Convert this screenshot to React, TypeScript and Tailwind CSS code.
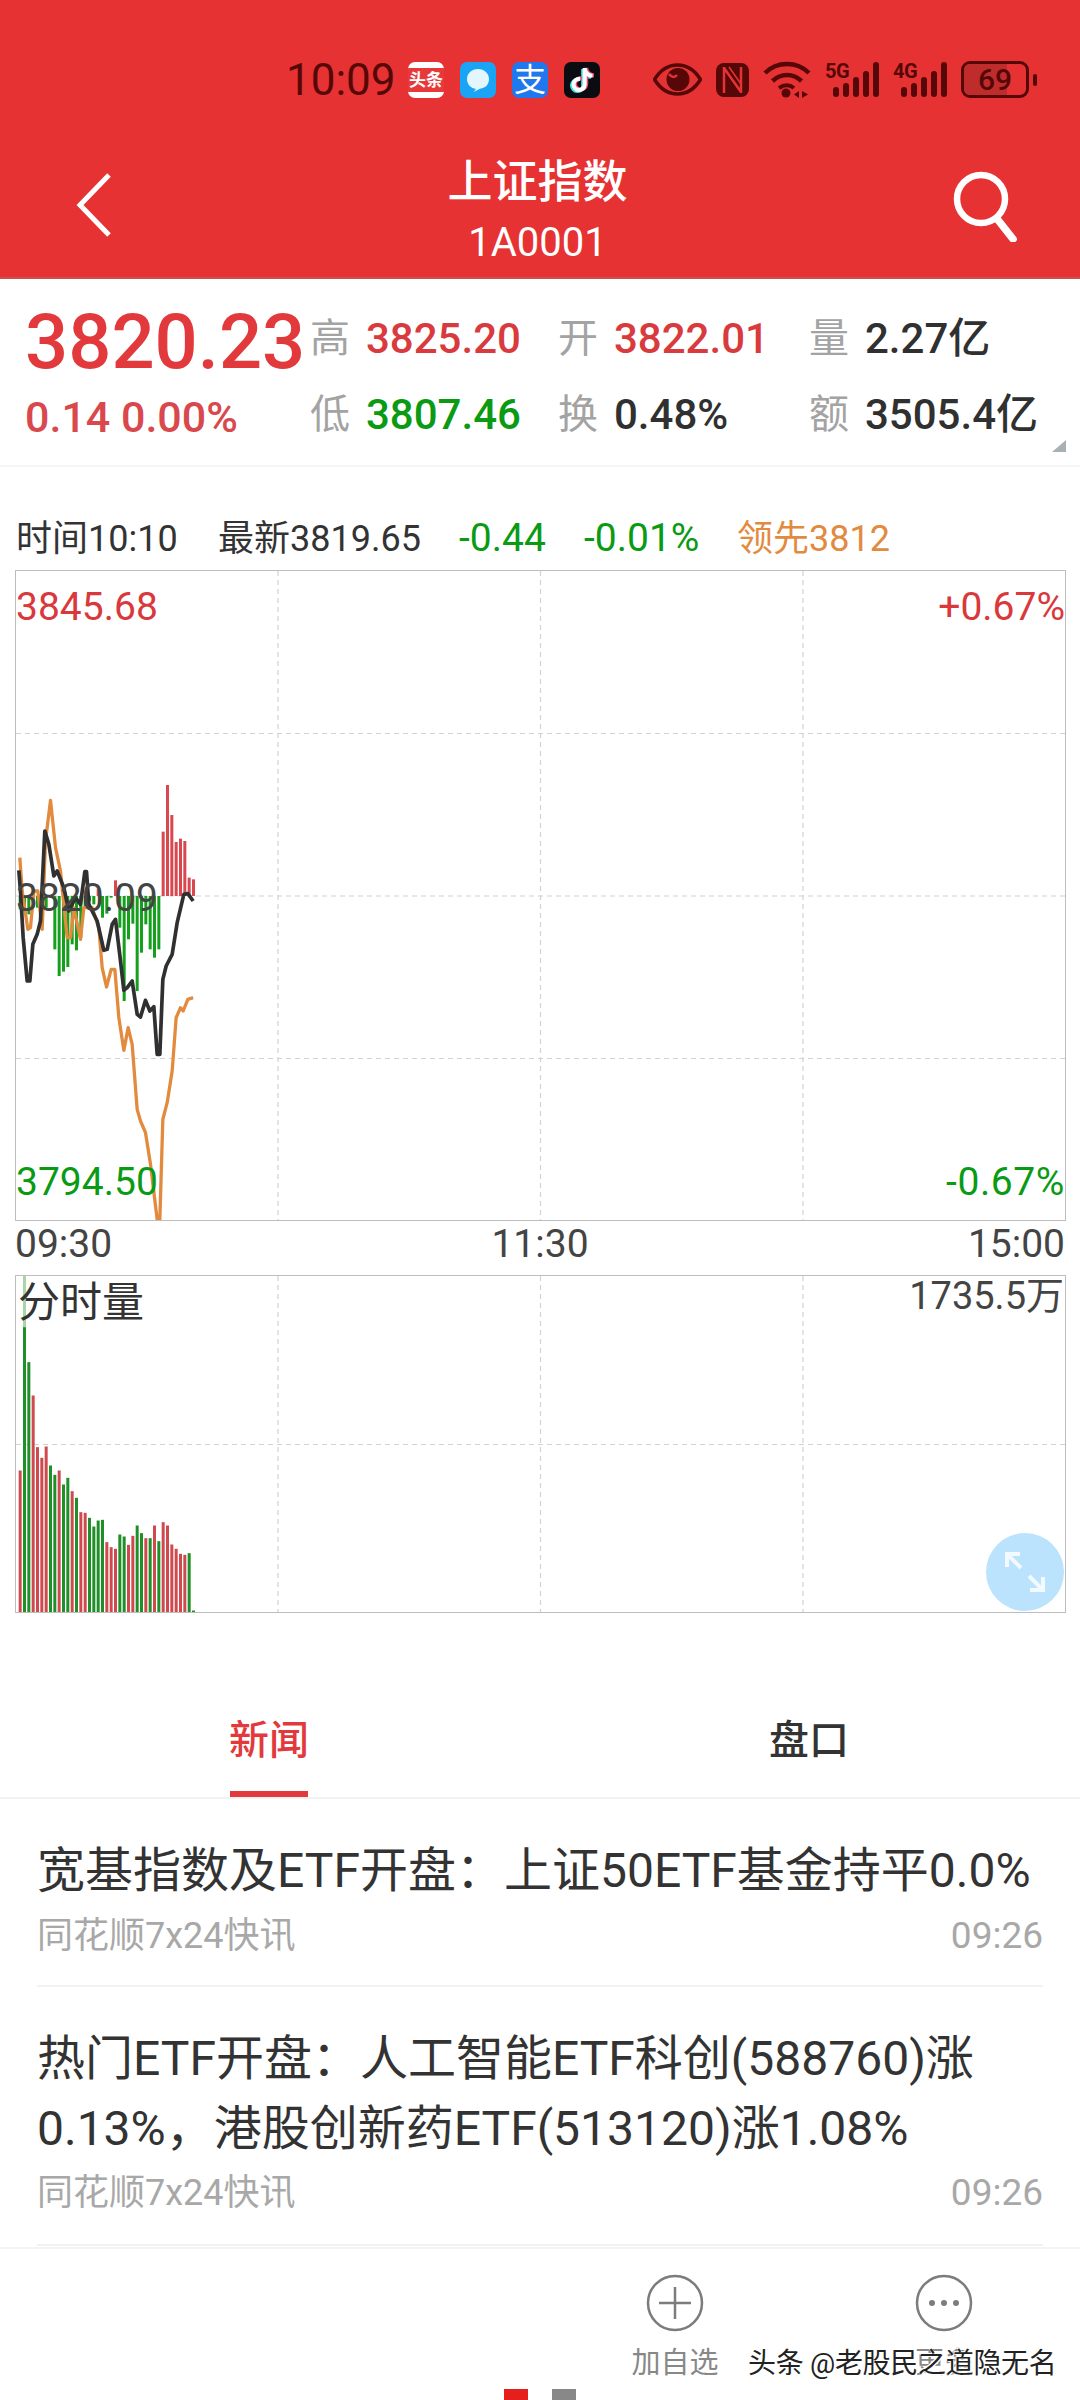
import React from "react";
import { FaTiktok } from "react-icons/fa6";

const RED = "#d93a3e";
const GREEN = "#0a9a14";
const ORANGE = "#e28a3e";
const ax = (u: number) => u / 3 - 15.5;

const priceLine: [number, number][] = [[55,388],[60,450],[68,590],[80,720],[88,720],[97,610],[110,580],[120,540],[133,270],[145,310],[160,405],[170,390],[190,440],[205,510],[225,470],[240,490],[253,392],[258,392],[265,490],[290,540],[310,628],[320,625],[335,550],[345,535],[360,660],[370,748],[380,740],[395,720],[410,820],[420,828],[435,778],[448,810],[460,797],[470,940],[478,940],[487,715],[497,675],[515,640],[530,545],[550,460],[562,458],[578,480]];
const leadLine: [number, number][] = [[58,350],[65,450],[82,565],[90,560],[100,450],[112,450],[125,565],[135,300],[150,178],[165,320],[180,390],[200,590],[210,590],[220,500],[240,595],[250,500],[275,500],[295,560],[305,680],[318,738],[332,685],[343,685],[355,830],[370,928],[383,860],[395,910],[410,1105],[420,1140],[435,1175],[450,1270],[470,1435],[478,1435],[487,1135],[500,1085],[515,990],[527,830],[540,800],[548,810],[562,775],[578,770]];
const priceBars: [number, number][] = [[59,505],[72,510],[85,520],[98,500],[111,500],[137,500],[150,470],[163,625],[176,705],[189,692],[202,678],[215,610],[228,628],[241,590],[254,500],[267,480],[280,490],[293,445],[306,530],[319,518],[332,470],[345,418],[358,560],[371,780],[384,595],[397,548],[410,750],[423,635],[436,550],[449,625],[462,650],[475,625],[488,272],[501,132],[514,222],[527,303],[540,293],[553,300],[566,410],[579,415]];
const volBars: [number, number, number][] = [[59,630,1],[72,200,0],[85,305,0],[98,405,1],[111,560,1],[124,592,1],[137,558,1],[150,615,0],[163,643,0],[176,630,1],[189,672,0],[202,652,0],[215,692,1],[228,712,0],[241,755,1],[254,757,1],[267,772,0],[280,798,0],[293,780,0],[306,778,0],[319,845,1],[332,860,1],[345,865,1],[358,822,0],[371,828,0],[384,853,1],[397,826,1],[410,795,0],[423,818,0],[436,833,1],[449,833,0],[462,795,1],[475,842,0],[488,785,1],[501,795,1],[514,852,1],[527,865,1],[540,880,1],[553,883,1],[566,878,0],[579,1050,0]];

const VLines = ({ h }: { h: number }) => (
  <>
    {[262, 524.5, 787].map((x) => (
      <line key={x} x1={x} x2={x} y1={0} y2={h} stroke="#d2d2d2" strokeWidth="1.2" strokeDasharray="5 4" />
    ))}
  </>
);

const PriceChart = () => {
  const py = (v: number) => 740 + v / 3 - 570;
  const pts = (a: [number, number][]) => a.map(([u, v]) => `${ax(u)},${py(v)}`).join(" ");
  return (
    <svg width="1049" height="649" viewBox="0 0 1049 649" className="block">
      <VLines h={649} />
      {[162.5, 325, 487.5].map((y) => (
        <line key={y} x1={0} x2={1049} y1={y} y2={y} stroke="#d2d2d2" strokeWidth="1.2" strokeDasharray="5 4" />
      ))}
      {priceBars.map(([u, v]) => {
        const base = py(465);
        const y = py(v);
        const up = y < base;
        return <rect key={u} x={ax(u) - 1.5} width="3" y={Math.min(y, base)} height={Math.abs(y - base)} fill={up ? "#d9474f" : "#14a01c"} />;
      })}
      <polyline points={pts(leadLine)} fill="none" stroke={ORANGE} strokeWidth="3.3" strokeLinejoin="round" />
      <polyline points={pts(priceLine)} fill="none" stroke="#303030" strokeWidth="3.7" strokeLinejoin="round" />
    </svg>
  );
};

const VolChart = () => {
  const vy = (v: number) => v / 3 - 15.5;
  return (
    <svg width="1049" height="336" viewBox="0 0 1049 336" className="block">
      <VLines h={336} />
      <line x1={0} x2={1049} y1={168.5} y2={168.5} stroke="#d2d2d2" strokeWidth="1.2" strokeDasharray="5 4" />
      <rect x={ax(72) - 1.5} width="3" y={0} height={vy(200)} fill="#a9d6a9" />
      {volBars.map(([u, v, r]) => (
        <rect key={u} x={ax(u) - 1.5} width="3" y={vy(v)} height={336 - vy(v)} fill={r ? "#cf4a4e" : "#1f8f28"} />
      ))}
    </svg>
  );
};

const StatCell = ({ label, value, color, w }: { label: string; value: string; color: string; w: string }) => (
  <div className={`flex items-center ${w}`}>
    <span className="text-[40px] leading-none text-[#a3a3a3] w-[56px] shrink-0">{label}</span>
    <span className="text-[42px] leading-none font-medium" style={{ color }}>{value}</span>
  </div>
);

const Signal = ({ t }: { t: string }) => (
  <div className="relative w-[54px] h-[37px]">
    <svg width="54" height="37" viewBox="0 0 54 37" className="block">
      {[[8, 26, 10], [18, 22, 14], [28, 16, 20], [38, 10, 26], [48, 1, 35]].map(([x, y, h]) => (
        <rect key={x} x={x} y={y} width="6" height={h} rx="3" fill="#560808" />
      ))}
    </svg>
    <span className="absolute left-0 top-[1px] text-[20px] leading-[18px] font-bold text-[#560808] tracking-[-0.5px]">{t}</span>
  </div>
);

const NewsMeta = ({ time }: { time: string }) => (
  <div className="flex justify-between items-center text-[36px] leading-[44px] text-[#a8a8a8]">
    <span>同花顺7x24快讯</span>
    <span className="text-[37px]">{time}</span>
  </div>
);

export default function App() {
  return (
    <div className="w-[1080px] h-[2400px] overflow-hidden bg-white flex flex-col font-['Roboto','Noto_Sans_CJK_SC',sans-serif]">
      {/* Header */}
      <header className="h-[279px] shrink-0 bg-[#e63232] border-b-2 border-[#c9524c] text-white">
        <div className="flex items-center h-[37px] mt-[61px] pl-[286px]">
          <span className="text-[44px] leading-none text-[#560808] w-[122px]">10:09</span>
          <div className="flex gap-[16px]">
            <div className="w-[36px] h-[36px] rounded-[7px] bg-white flex items-center justify-center overflow-hidden">
              <span className="w-full h-[24px] bg-[#e8393a] text-white text-[17px] leading-[24px] font-bold text-center">头条</span>
            </div>
            <div className="w-[36px] h-[36px] rounded-[7px] bg-[#1aa4f5] flex items-center justify-center">
              <svg width="28" height="28" viewBox="0 0 28 28">
                <path d="M14 3C7.5 3 3 7.5 3 13s4.2 9.6 9 9.9l-2.5 3 6.5-3.2C22 22 25 18 25 13 25 7.5 20.500 3 14 3z" fill="#e3f5fd" />
              </svg>
            </div>
            <div className="w-[36px] h-[36px] rounded-[7px] bg-[#1f78ee] flex items-center justify-center">
              <span className="text-[32px] leading-none text-white">支</span>
            </div>
            <div className="w-[36px] h-[36px] rounded-[7px] bg-[#0b0b12] flex items-center justify-center relative">
              <FaTiktok className="absolute text-[24px] text-[#34e0e8] -translate-x-[1.500px] translate-y-[1px]" />
              <FaTiktok className="absolute text-[24px] text-[#f04a6a] translate-x-[1.500px] -translate-y-[0.500px]" />
              <FaTiktok className="absolute text-[24px] text-white" />
            </div>
          </div>
          <div className="flex items-center ml-[53px] gap-[14px]">
            <svg width="49" height="33" viewBox="0 0 49 33" className="block">
              <path d="M1.500 16.500C8 6 16 2 24.500 2S41 6 47.500 16.500C41 27 33 31 24.500 31S8 27 1.500 16.500z" fill="none" stroke="#560808" strokeWidth="3.500" />
              <circle cx="25" cy="16.500" r="11.500" fill="#560808" />
              <path d="M16 11c3 4 6 3.500 8 1" stroke="#e63232" strokeWidth="2.500" fill="none" />
            </svg>
            <svg width="33" height="34" viewBox="0 0 33 34" className="block">
              <rect x="0" y="0" width="33" height="34" rx="8" fill="#560808" />
              <path d="M8 4v26M8 5l17 24M25 4v26" stroke="#e63232" strokeWidth="2.500" fill="none" />
              <path d="M13 4l12 17" stroke="#e63232" strokeWidth="1.500" fill="none" />
            </svg>
            <svg width="48" height="37" viewBox="0 0 48 37" className="block">
              <path d="M2 12C14 0 34 0 46 12" fill="none" stroke="#560808" strokeWidth="4.500" />
              <path d="M9.500 20C18 12 30 12 38.500 20" fill="none" stroke="#560808" strokeWidth="4.500" />
              <path d="M16 27c5-3.500 10.500-3.500 15 0" fill="none" stroke="#560808" strokeWidth="4" />
              <circle cx="23" cy="32" r="4.500" fill="#560808" />
              <path d="M36 30l-5 3.500 5 3.500zM39 37l6-3.500-6-3.500z" fill="#560808" />
            </svg>
            <Signal t="5G" />
            <Signal t="4G" />
            <div className="flex items-center gap-[4px]">
              <div className="relative w-[68px] h-[37px] rounded-[9px] border-[3px] border-[#560808] overflow-hidden flex items-center justify-center">
                <div className="absolute left-0 top-0 bottom-0 w-[69%] bg-[#bf2c2c]" />
                <span className="relative text-[30px] leading-none font-medium text-[#560808]">69</span>
              </div>
              <div className="w-[4px] h-[12px] rounded-full bg-[#560808]" />
            </div>
          </div>
        </div>
        <div className="relative flex items-start justify-between mt-[60px] px-[74px]">
          <svg width="40" height="66" viewBox="0 0 40 66" className="block mt-[14px]">
            <path d="M35 3L6 33l29 30" fill="none" stroke="#fff" strokeWidth="5" />
          </svg>
          <div className="flex flex-col items-center translate-x-[5px]">
            <span className="text-[45px] leading-[50px] font-medium">上证指数</span>
            <span className="text-[40px] leading-[44px] mt-[13px]">1A0001</span>
          </div>
          <svg width="70" height="72" viewBox="0 0 70 72" className="block mt-[12px] -mr-[15px]">
            <circle cx="30" cy="29" r="24" fill="none" stroke="#fff" strokeWidth="6.500" />
            <path d="M47 50l15 19" stroke="#fff" strokeWidth="7.500" fill="none" strokeLinecap="round" />
          </svg>
        </div>
      </header>

      {/* Stats */}
      <section className="relative h-[188px] shrink-0 border-b-2 border-[#f6f6f6] flex pt-[31px]">
        <div className="w-[310px] shrink-0 pl-[25px]">
          <div className="text-[76px] leading-[64px] font-medium text-[#e23a3c]">3820.23</div>
          <div className="text-[43px] leading-[40px] mt-[23px] text-[#d9484c] font-medium">0.14 0.00%</div>
        </div>
        <div className="flex flex-col gap-[34px] pt-[8px]">
          <div className="flex">
            <StatCell w="w-[248px]" label="高" value="3825.20" color={RED} />
            <StatCell w="w-[251px]" label="开" value="3822.01" color={RED} />
            <StatCell w="w-[271px]" label="量" value="2.27亿" color="#303030" />
          </div>
          <div className="flex">
            <StatCell w="w-[248px]" label="低" value="3807.46" color={GREEN} />
            <StatCell w="w-[251px]" label="换" value="0.48%" color="#303030" />
            <StatCell w="w-[271px]" label="额" value="3505.4亿" color="#303030" />
          </div>
        </div>
        <div className="absolute right-[14px] bottom-[13px] w-0 h-0 border-l-[14px] border-l-transparent border-b-[12px] border-b-[#a8b0b4]" />
      </section>

      {/* Info line */}
      <div className="h-[103px] shrink-0 flex items-center pt-[40px] pl-[16px] text-[36px] leading-none text-[#333]">
        <span className="w-[202px]">时间10:10</span>
        <span className="w-[241px]">最新3819.65</span>
        <span className="w-[125px] text-[39px] text-[#0a9a14]">-0.44</span>
        <span className="w-[153px] text-[39px] text-[#0a9a14]">-0.01%</span>
        <span className="text-[#e28a3e]">领先3812</span>
      </div>

      {/* Price chart */}
      <div className="relative ml-[15px] w-[1051px] h-[651px] shrink-0 border border-[#bdbdbd]">
        <PriceChart />
        <span className="absolute left-0 top-[14px] text-[39px] leading-[44px] text-[#d9383c]">3845.68</span>
        <span className="absolute right-[0px] top-[14px] text-[39px] leading-[44px] text-[#d9383c]">+0.67%</span>
        <span className="absolute left-0 top-[305px] text-[39px] leading-[44px] text-[#444]">3820.09</span>
        <span className="absolute left-0 bottom-[16px] text-[39px] leading-[44px] text-[#0a9a14]">3794.50</span>
        <span className="absolute right-[0px] bottom-[16px] text-[39px] leading-[44px] tracking-[0.6px] text-[#0a9a14]">-0.67%</span>
      </div>

      {/* Time axis */}
      <div className="h-[54px] shrink-0 px-[15px] pb-[8px] flex items-center justify-between text-[39px] leading-none text-[#444]">
        <span>09:30</span>
        <span>11:30</span>
        <span>15:00</span>
      </div>

      {/* Volume chart */}
      <div className="relative ml-[15px] w-[1051px] h-[338px] shrink-0 border border-[#bdbdbd]">
        <VolChart />
        <span className="absolute left-[2px] top-[4px] text-[42px] leading-[46px] text-[#333]">分时量</span>
        <span className="absolute right-[1px] top-[-2px] text-[38px] leading-[44px] text-[#444]">1735.5万</span>
        <div className="absolute right-[1px] bottom-[1px] w-[78px] h-[78px] rounded-full bg-[#bbe3fd] flex items-center justify-center">
          <svg width="44" height="44" viewBox="0 0 44 44">
            <path d="M4 17V4h13M4 4l14 14M40 27v13H27M40 40L26 26" fill="none" stroke="#f3faff" strokeWidth="4" />
          </svg>
        </div>
      </div>

      {/* Tabs */}
      <div className="h-[186px] shrink-0 border-b-2 border-[#f2f2f2] flex items-end">
        <div className="w-[538px] flex flex-col items-center">
          <span className="text-[40px] leading-[46px] text-[#e23a3c] font-medium">新闻</span>
          <div className="w-[78px] h-[6px] bg-[#e23a3c] mt-[27px]" />
        </div>
        <div className="w-[542px] flex flex-col items-center">
          <span className="text-[40px] leading-[46px] text-[#333] font-medium">盘口</span>
          <div className="h-[6px] mt-[27px]" />
        </div>
      </div>

      {/* News */}
      <div className="flex-1 px-[37px] overflow-hidden">
        <div className="border-b-2 border-[#f2f2f2] h-[188px] pt-[37px]">
          <div className="text-[48px] leading-[70px] text-[#333] whitespace-nowrap">宽基指数及ETF开盘：上证50ETF基金持平0.0%</div>
          <div className="mt-[8px]"><NewsMeta time="09:26" /></div>
        </div>
        <div className="border-b-2 border-[#f2f2f2] h-[259px] pt-[37px]">
          <div className="text-[48px] leading-[70px] text-[#333] whitespace-nowrap">热门ETF开盘：人工智能ETF科创(588760)涨<br />0.13%，港股创新药ETF(513120)涨1.08%</div>
          <div className="mt-[7px]"><NewsMeta time="09:26" /></div>
        </div>
      </div>

      {/* Bottom bar */}
      <div className="relative h-[153px] shrink-0 border-t-2 border-[#f4f4f4]">
        <div className="absolute left-[632px] top-[25px] w-[86px] flex flex-col items-center text-[#888]">
          <svg width="58" height="58" viewBox="0 0 58 58" className="block">
            <circle cx="29" cy="29" r="27" fill="none" stroke="#7c7c7c" strokeWidth="2.500" />
            <path d="M29 13v32M13 29h32" stroke="#7c7c7c" strokeWidth="2.500" />
          </svg>
          <span className="text-[29px] leading-[34px] mt-[14px] whitespace-nowrap">加自选</span>
        </div>
        <div className="absolute left-[901px] top-[25px] w-[86px] flex flex-col items-center text-[#888]">
          <svg width="58" height="58" viewBox="0 0 58 58" className="block">
            <circle cx="29" cy="29" r="27" fill="none" stroke="#7c7c7c" strokeWidth="2.500" />
            <circle cx="17" cy="29" r="3" fill="#7c7c7c" />
            <circle cx="29" cy="29" r="3" fill="#7c7c7c" />
            <circle cx="41" cy="29" r="3" fill="#7c7c7c" />
          </svg>
          <span className="text-[29px] leading-[34px] mt-[14px] whitespace-nowrap">更多</span>
        </div>
        <span className="absolute left-[748px] top-[99px] text-[28px] tracking-[-0.3px] leading-[32px] text-[#222] whitespace-nowrap [text-shadow:1px_1px_0_#fff,-1px_-1px_0_#fff]">头条 @老股民之道隐无名</span>
        <div className="absolute bottom-0 left-[504px] flex gap-[24px]">
          <div className="w-[24px] h-[11px] bg-[#e5201c]" />
          <div className="w-[24px] h-[11px] bg-[#888]" />
        </div>
      </div>
    </div>
  );
}
